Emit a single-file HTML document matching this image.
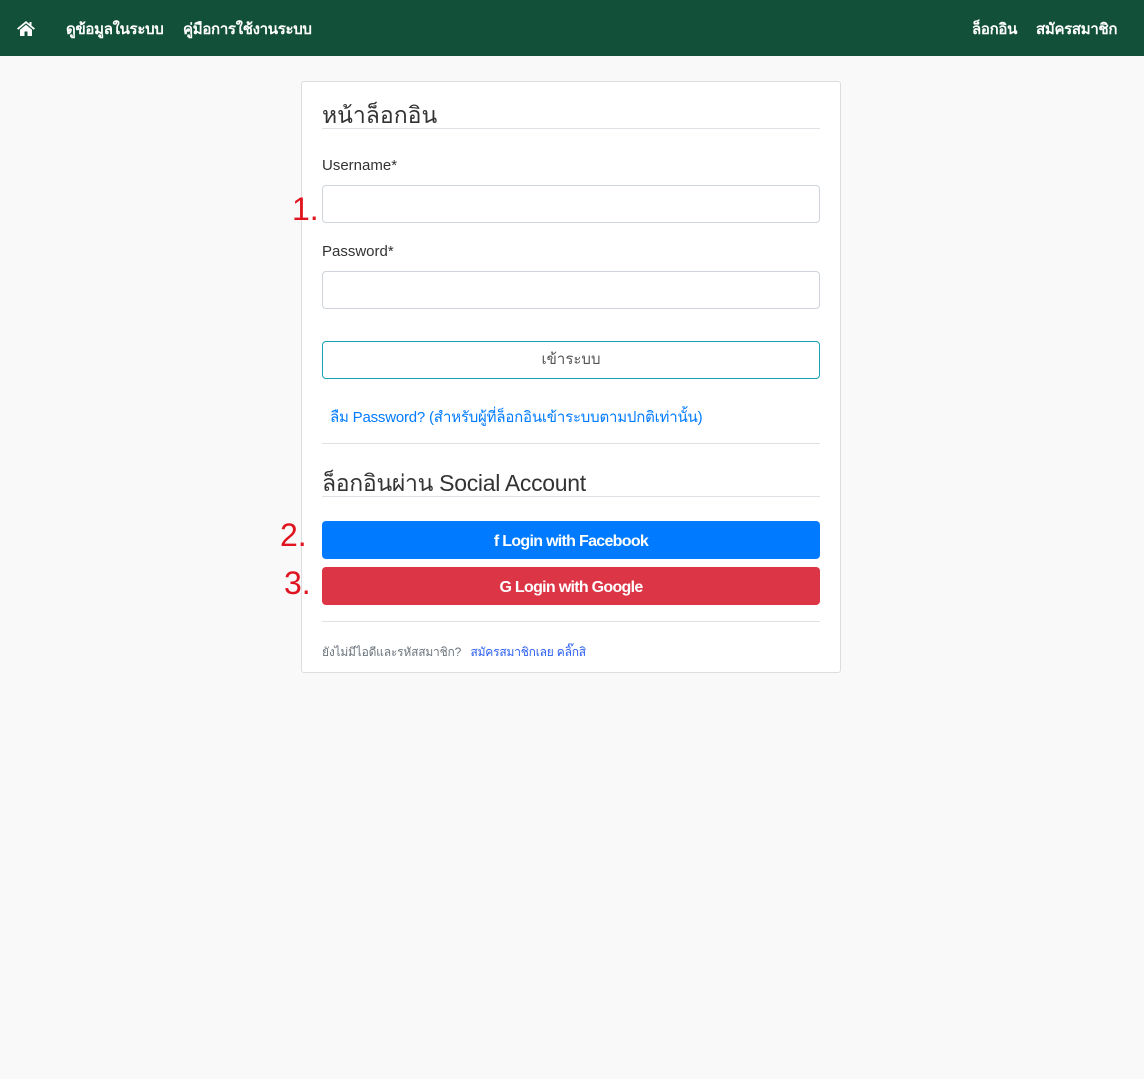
<!DOCTYPE html>
<html><head><meta charset="utf-8"><style>
body{margin:0;background:#f9f9f9;font-family:"Liberation Sans","Noto Sans CJK SC",sans-serif;color:#333;width:1144px;height:1079px;position:relative;overflow:hidden}
.nav{position:absolute;left:0;top:0;width:1144px;height:56px;background:#13503a;color:#fff;font-size:15px}
.nav span{position:absolute;top:17px;font-weight:bold;letter-spacing:-0.3px}
.card{position:absolute;left:301px;top:81px;width:538px;height:590px;background:#fff;border:1px solid #ddd;border-radius:3px}
.a{position:absolute}
.hr{position:absolute;left:20px;width:498px;height:1px;background:#dee2e6}
.inp{position:absolute;left:20px;width:496px;height:36px;border:1px solid #ced4da;border-radius:4px}
.btn{position:absolute;left:20px;width:498px;height:38px;border-radius:4px;color:#fff;font-weight:bold;font-size:16px;text-align:center;line-height:42px;letter-spacing:-0.7px}
.num{position:absolute;color:#e0141e;font-size:32px;z-index:5;line-height:1}
</style></head><body>
<div class="nav">
<svg class="a" style="left:16px;top:20px" width="20" height="16" viewBox="0 0 20 16"><path d="M10 1L1 8.5l1.3 1.2L10 3.3l7.7 6.4L19 8.5 15.5 5.6V2h-2v2L10 1z M4 9.8V16h4.5v-4.5h3V16H16V9.8L10 4.8z" fill="#fff"/></svg>
<span style="left:66px">ดูข้อมูลในระบบ</span><span style="left:183px">คู่มือการใช้งานระบบ</span>
<span style="left:972px">ล็อกอิน</span><span style="left:1036px">สมัครสมาชิก</span>
</div>
<div class="num" style="left:292px;top:193px">1.</div>
<div class="num" style="left:280px;top:519px">2.</div>
<div class="num" style="left:284px;top:567px">3.</div>
<div class="card">
<div class="a" style="left:20px;top:16px;font-size:23px;color:#333">หน้าล็อกอิน</div>
<div class="hr" style="top:46px"></div>
<div class="a" style="left:20px;top:75px;font-size:15px">Username*</div>
<div class="inp" style="top:103px"></div>
<div class="a" style="left:20px;top:161px;font-size:15px">Password*</div>
<div class="inp" style="top:189px"></div>
<div class="a" style="left:20px;top:259px;width:496px;height:36px;border:1px solid #17a2b8;border-radius:4px;text-align:center;line-height:36px;color:#555;font-size:15px">เข้าระบบ</div>
<div class="a" style="left:28px;top:323px;font-size:15px;color:#007bff;letter-spacing:-0.2px">ลืม Password? (สำหรับผู้ที่ล็อกอินเข้าระบบตามปกติเท่านั้น)</div>
<div class="hr" style="top:361px"></div>
<div class="a" style="left:20px;top:384px;font-size:23px;letter-spacing:-0.3px">ล็อกอินผ่าน Social Account</div>
<div class="hr" style="top:414px"></div>
<div class="btn" style="top:439px;background:#007bff">f Login with Facebook</div>
<div class="btn" style="top:485px;background:#dc3545">G Login with Google</div>
<div class="hr" style="top:539px"></div>
<div class="a" style="left:20px;top:561px;font-size:12px;color:#6c757d;letter-spacing:-0.2px">ยังไม่มีไอดีและรหัสสมาชิก? &nbsp; <span style="color:#2b5ff0">สมัครสมาชิกเลย คลิ๊กสิ</span></div>
</div>
</body></html>
